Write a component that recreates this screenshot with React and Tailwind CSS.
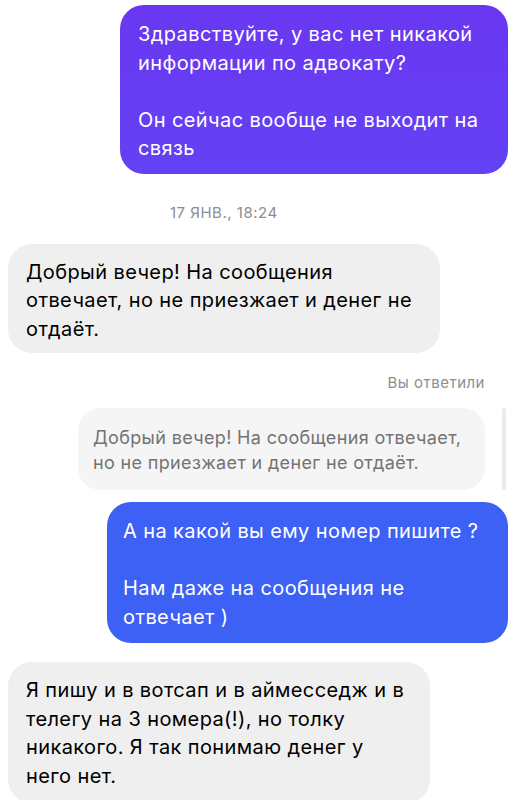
import React from "react";

export default function App() {
  return (
    <div className="w-[519px] h-[800px] overflow-hidden bg-white flex flex-col pt-[5px] font-['Inter','Noto_Sans',sans-serif]">
      <div className="flex justify-end pr-[11px]">
        <div className="w-[388px] rounded-[24px] px-[18px] pt-[15px] pb-[11px] bg-linear-to-b from-[#6a37f1] to-[#6341f5] text-white text-[20px] tracking-[0.4px] leading-[28.5px] whitespace-pre-line">
          {"Здравствуйте, у вас нет никакой\nинформации по адвокату?\n\nОн сейчас вообще не выходит на\nсвязь"}
        </div>
      </div>

      <div className="mt-[29px] pl-[170px] text-[15px] tracking-[0.5px] leading-[20px] text-[#8e8e8e]">
        17 ЯНВ., 18:24
      </div>

      <div className="mt-[21px] flex justify-start pl-[8px]">
        <div className="w-[432px] rounded-[24px] px-[18px] pt-[14px] pb-[10px] bg-[#efefef] text-black text-[20px] tracking-[0.4px] leading-[28.5px] whitespace-pre-line">
          {"Добрый вечер! На сообщения\nотвечает, но не приезжает и денег не\nотдаёт."}
        </div>
      </div>

      <div className="mt-[20px] flex justify-end pr-[34px] text-[15px] tracking-[0.5px] leading-[20px] text-[#8e8e8e]">
        Вы ответили
      </div>

      <div className="mt-[15px] flex justify-end items-stretch gap-[17px] pr-[13px]">
        <div className="w-[407px] rounded-[22px] px-[15px] pt-[17px] pb-[15px] bg-[#f5f5f5] text-[#737373] text-[18px] tracking-[0.35px] leading-[25px] whitespace-pre-line">
          {"Добрый вечер! На сообщения отвечает,\nно не приезжает и денег не отдаёт."}
        </div>
        <div className="w-[4px] rounded-full bg-[#ebebeb]" />
      </div>

      <div className="mt-[12px] flex justify-end pr-[11px]">
        <div className="w-[401px] rounded-[24px] px-[16px] pt-[15px] pb-[12px] bg-[#3d60f5] text-white text-[20px] tracking-[0.4px] leading-[28.5px] whitespace-pre-line">
          {"А на какой вы ему номер пишите ?\n\nНам даже на сообщения не\nотвечает )"}
        </div>
      </div>

      <div className="mt-[19px] flex justify-start pl-[8px]">
        <div className="w-[422px] rounded-[24px] px-[18px] pt-[14px] pb-[13px] bg-[#efefef] text-black text-[20px] tracking-[0.4px] leading-[28.5px] whitespace-pre-line">
          {"Я пишу и в вотсап и в аймесседж и в\nтелегу на 3 номера(!), но толку\nникакого. Я так понимаю денег у\nнего нет."}
        </div>
      </div>
    </div>
  );
}
